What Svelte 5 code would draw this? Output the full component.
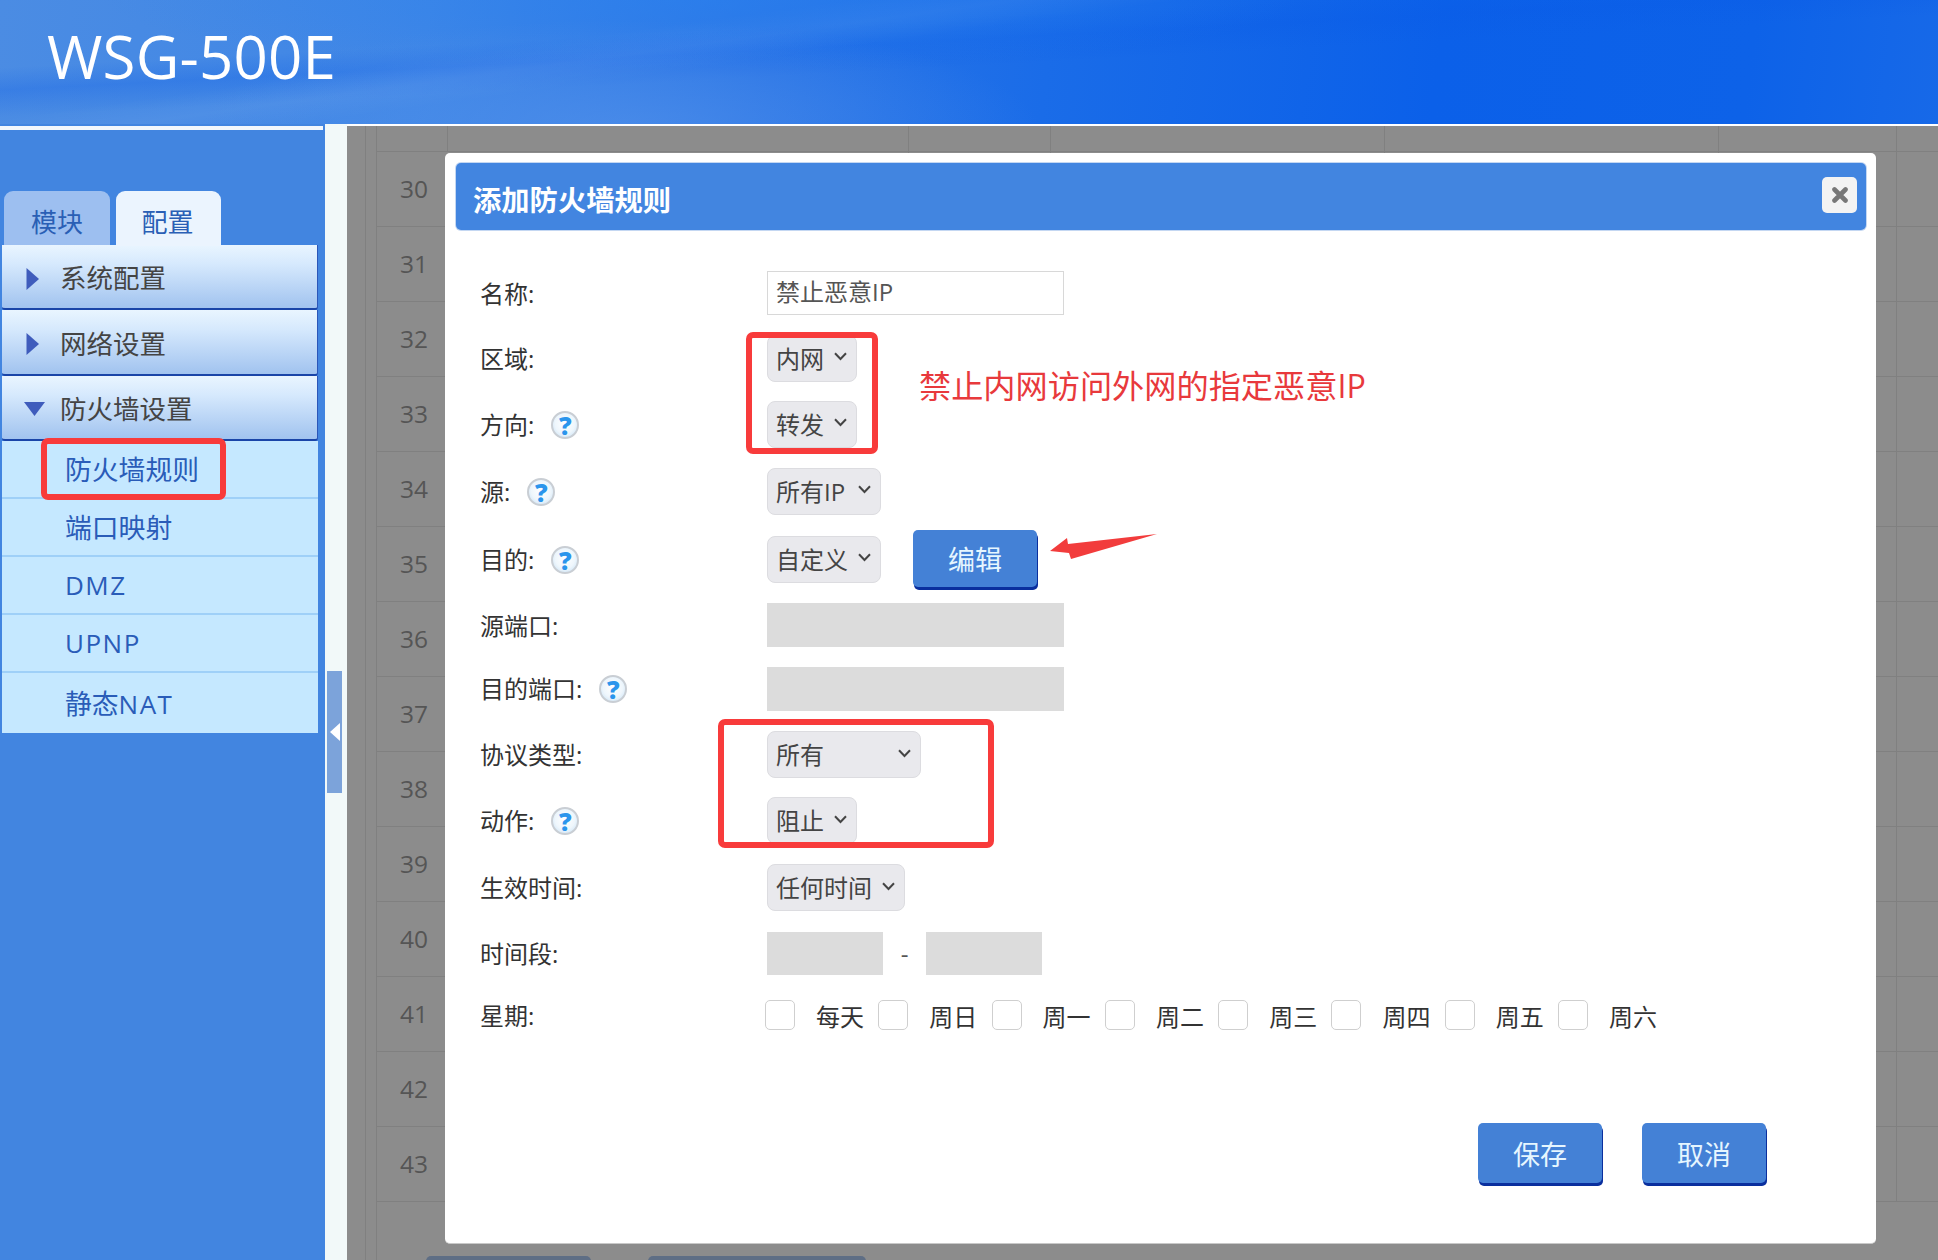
<script>
  const cols = [0, 1, 2, 3, 4, 5];
  const rowNums = Array.from({ length: 14 }, (_, i) => 30 + i);
  const menu = [
    { label: '系统配置', open: false },
    { label: '网络设置', open: false },
    { label: '防火墙设置', open: true }
  ];
  const subs = ['防火墙规则', '端口映射', 'DMZ', 'UPNP', '静态NAT'];
  const days = ['每天', '周日', '周一', '周二', '周三', '周四', '周五', '周六'];
  const parts = (s) => s.split(/([A-Za-z]+)/).filter(Boolean);
  const isLatin = (s) => /^[A-Za-z]+$/.test(s);
</script>

{#snippet help()}
  <span class="help" aria-hidden="true">?</span>
{/snippet}

{#snippet select(text, cls)}
  <div class="select {cls}">
    <span class="sel-text">{text}</span>
    <svg width="13" height="9" viewBox="0 0 13 9" aria-hidden="true"><polyline points="1,1.2 6.5,7 12,1.2" fill="none" stroke="#444" stroke-width="2" /></svg>
  </div>
{/snippet}

<div class="page">
  <header class="header">
    <div class="logo">WSG-500E</div>
  </header>
  <div class="main">
    <aside class="sidebar">
      <div class="whiteline"></div>
      <div class="tabs">
        <div class="tab off">模块</div>
        <div class="tab on">配置</div>
      </div>
      {#each menu as m}
        <div class="head">
          <svg class="arrow" width="21" height="24" viewBox="0 0 21 24" aria-hidden="true">
            {#if m.open}
              <path d="M0 5 H21 L10.5 19 Z" fill="#3f5cbc" />
            {:else}
              <path d="M2.5 1 L15 12 L2.5 23 Z" fill="#3f5cbc" />
            {/if}
          </svg>
          <span>{m.label}</span>
        </div>
      {/each}
      <div class="subs">
        {#each subs as s}
          <div class="sub">
            <span>{#each parts(s) as p}<span class:latin={isLatin(p)}>{p}</span>{/each}</span>
          </div>
        {/each}
      </div>
      <div class="mark side"></div>
    </aside>
    <div class="splitter">
      <div class="toggle">
        <svg width="10" height="18" viewBox="0 0 10 18" aria-hidden="true"><path d="M10 0 V18 L0 9 Z" fill="#fff" /></svg>
      </div>
    </div>
    <section class="content">
      <div class="table">
        <div class="row first">
          {#each cols as c}<div class="cell"></div>{/each}
        </div>
        {#each rowNums as n}
          <div class="row">
            <div class="cell num">{n}</div>
            {#each cols.slice(1) as c}<div class="cell"></div>{/each}
          </div>
        {/each}
      </div>
      <div class="bars">
        <div class="bar a"></div>
        <div class="bar b"></div>
      </div>

      <div class="modal">
        <div class="title">
          <span class="title-text">添加防火墙规则</span>
          <button class="close" aria-label="关闭">
            <svg width="16" height="16" viewBox="0 0 16 16" aria-hidden="true"><path d="M2.5 2.5 L13.5 13.5 M13.5 2.5 L2.5 13.5" stroke="#777" stroke-width="4.6" stroke-linecap="round" /></svg>
          </button>
        </div>
        <div class="form">
          <div class="lab">名称:</div>
          <div class="ctl"><div class="input text">禁止恶意IP</div></div>

          <div class="lab">区域:</div>
          <div class="ctl">{@render select('内网', 's90')}</div>

          <div class="lab">方向:{@render help()}</div>
          <div class="ctl">{@render select('转发', 's90')}</div>

          <div class="lab">源:{@render help()}</div>
          <div class="ctl">{@render select('所有IP', 's114')}</div>

          <div class="lab">目的:{@render help()}</div>
          <div class="ctl">
            {@render select('自定义', 's114')}
            <button class="btn edit">编辑</button>
          </div>

          <div class="lab">源端口:</div>
          <div class="ctl"><div class="input gray"></div></div>

          <div class="lab">目的端口:{@render help()}</div>
          <div class="ctl"><div class="input gray"></div></div>

          <div class="lab">协议类型:</div>
          <div class="ctl">{@render select('所有', 's154')}</div>

          <div class="lab">动作:{@render help()}</div>
          <div class="ctl">{@render select('阻止', 's90')}</div>

          <div class="lab">生效时间:</div>
          <div class="ctl">{@render select('任何时间', 's138')}</div>

          <div class="lab">时间段:</div>
          <div class="ctl time">
            <div class="input gray short"></div>
            <span class="dash">-</span>
            <div class="input gray short"></div>
          </div>

          <div class="lab">星期:</div>
          <div class="ctl week">
            {#each days as d}
              <div class="day"><span class="check"></span><span>{d}</span></div>
            {/each}
          </div>
        </div>
        <div class="footer">
          <button class="btn">保存</button>
          <button class="btn">取消</button>
        </div>

        <div class="mark box1"></div>
        <div class="mark box2"></div>
        <div class="note">禁止内网访问外网的指定恶意IP</div>
        <svg class="pointer" width="110" height="28" viewBox="0 0 110 28" aria-hidden="true">
          <path d="M0 17 L17 4 L18 10 L107 0 L21 25 L19 19 Z" fill="#f23c3c" />
        </svg>
      </div>
    </section>
  </div>
</div>

<style>
  :global(body) {
    margin: 0;
    overflow: hidden;
  }
  .page {
    width: 1938px;
    height: 1260px;
    display: flex;
    flex-direction: column;
    overflow: hidden;
    font-family: "Open Sans", "Noto Sans CJK SC", sans-serif;
    color: #333;
    font-size: 24px;
  }
  .header {
    height: 124px;
    flex: none;
    box-sizing: border-box;
    padding-left: 47px;
    background:
      radial-gradient(ellipse 420px 110px at 620px 130px, rgba(90,150,235,0.55), rgba(90,150,235,0)),
      radial-gradient(ellipse 600px 70px at 700px 0px, rgba(40,130,240,0.5), rgba(40,130,240,0)),
      linear-gradient(172deg, rgba(255,255,255,0) 30%, rgba(255,255,255,0.05) 36%, rgba(255,255,255,0) 42%),
      linear-gradient(177deg, rgba(10,90,230,0) 30%, rgba(10,90,230,0.28) 40%, rgba(10,90,230,0) 52%),
      linear-gradient(97deg, #4b8ce3 0%, #3f86e6 22%, #2a75e6 40%, #1a6ce8 54%, #0b60e9 74%, #0d62e8 90%, #1769e8 100%);
  }
  .logo {
    color: #fff;
    font-size: 60px;
    font-weight: 400;
    line-height: 112px;
    letter-spacing: 0.2px;
  }
  .main {
    flex: 1;
    display: flex;
    min-height: 0;
  }
  .sidebar {
    width: 325px;
    flex: none;
    position: relative;
    background: #4285e0;
  }
  .whiteline {
    height: 4px;
    width: 323px;
    margin-top: 2px;
    background: #f2f7fc;
  }
  .tabs {
    display: flex;
    gap: 6px;
    margin: 61px 0 0 4px;
    height: 54px;
  }
  .tab {
    width: 106px;
    box-sizing: border-box;
    padding-top: 8px;
    border-radius: 9px 9px 0 0;
    text-align: center;
    font-size: 26px;
    color: #2a5fb5;
    line-height: 46px;
  }
  .tab.off {
    background: #9dbff0;
  }
  .tab.on {
    background: #ebf4fe;
    width: 105px;
    height: 55px;
    padding-right: 2px;
  }
  .head {
    width: 316px;
    margin-left: 2px;
    height: 65.3px;
    box-sizing: border-box;
    display: flex;
    align-items: center;
    gap: 15px;
    padding: 4px 0 0 22px;
    font-size: 26.5px;
    color: #444;
    background: linear-gradient(180deg, #e9f5ff 0%, #d6e9fd 30%, #a1c3ef 100%);
    border-right: 1px solid #2b56b8;
    border-bottom: 2px solid #1a45a8;
    border-radius: 0 0 3px 3px;
  }
  .head span {
    line-height: 1;
  }
  .subs {
    width: 316px;
    margin-left: 2px;
    background: #c5e8ff;
  }
  .sub {
    height: 58px;
    box-sizing: border-box;
    padding-left: 63px;
    display: flex;
    align-items: center;
    font-size: 26.8px;
    color: #2a5cb8;
    border-bottom: 2px solid #9fd0f8;
  }
  .sub:last-child {
    border-bottom: 0;
    height: 60px;
  }
  .latin {
    font-size: 26px;
    letter-spacing: 1.5px;
  }
  .mark {
    position: absolute;
    box-sizing: border-box;
    border: 6px solid #f83b3b;
    border-radius: 7px;
  }
  .side {
    left: 41px;
    top: 314px;
    width: 185px;
    height: 62px;
  }
  .splitter {
    width: 22px;
    flex: none;
    background: #f2f9f9;
    position: relative;
  }
  .toggle {
    position: absolute;
    left: 2px;
    top: 547px;
    width: 15px;
    height: 122px;
    background: #7ca3da;
    display: flex;
    align-items: center;
    justify-content: center;
  }
  .content {
    flex: 1;
    position: relative;
    min-width: 0;
    box-sizing: border-box;
    border-top: 2px solid #fff;
    padding-left: 29px;
    background-color: #8c8c8c;
    background-image:
      linear-gradient(#808080, #808080),
      linear-gradient(#808080, #808080);
    background-size: 1px 100%, 1px 100%;
    background-position: 18px 0, 29px 0;
    background-repeat: no-repeat;
  }
  .table {
    display: flex;
    flex-direction: column;
  }
  .row {
    display: grid;
    grid-template-columns: 72px 461px 142px 334px 334px 178px;
    height: 75px;
    box-sizing: border-box;
    border-bottom: 1px solid #808080;
  }
  .row.first {
    height: 26px;
  }
  .cell {
    border-right: 1px solid #808080;
  }
  .num {
    font-size: 24.5px;
    color: #555;
    display: flex;
    align-items: center;
    justify-content: flex-start;
    padding: 0 0 2px 24px;
    border-right: 0;
  }
  .bars {
    display: flex;
    gap: 57px;
    margin: 54px 0 0 50px;
  }
  .bar {
    height: 12px;
    border-radius: 5px 5px 0 0;
    background: #5e6e85;
  }
  .bar.a { width: 165px; }
  .bar.b { width: 218px; }
  .modal {
    position: absolute;
    left: 98px;
    top: 27px;
    width: 1431px;
    height: 1091px;
    box-sizing: border-box;
    background: #fff;
    border-radius: 5px;
    padding: 10px 10px 0 11px;
    border-bottom: 1px solid #c8c8c8;
  }
  .title {
    height: 67px;
    background: #4285e0;
    border-radius: 5px;
    display: flex;
    align-items: center;
    justify-content: space-between;
    padding-left: 17px;
    box-sizing: border-box;
    color: #fff;
    font-size: 28.3px;
    font-weight: 700;
    box-shadow: 0 0 0 1px #c4d7f2;
  }
  .title-text {
    padding-top: 3px;
  }
  .close {
    width: 35px;
    height: 36px;
    margin: -3px 9px 0 0;
    padding: 0;
    border: 0;
    border-radius: 5px;
    background: #f3f3f3;
    display: flex;
    align-items: center;
    justify-content: center;
  }
  .form {
    display: grid;
    grid-template-columns: 287px 1fr;
    grid-template-rows: 60px 70px 62px 72px 64px 68px 59px 73px 59px 75px 57px 66px;
    margin: 33px 0 0 24px;
  }
  .lab {
    display: flex;
    align-items: center;
    gap: 17px;
    color: #333;
    white-space: nowrap;
    padding-bottom: 2px;
  }
  .ctl {
    display: flex;
    align-items: center;
  }
  .select {
    height: 47px;
    box-sizing: border-box;
    border: 1px solid #dcdce0;
    border-radius: 8px;
    background: #e9e9ed;
    display: flex;
    align-items: center;
    justify-content: space-between;
    padding: 0 9px 0 8px;
    color: #444;
  }
  .sel-text {
    padding-bottom: 2px;
  }
  .select svg {
    margin-top: -3px;
    flex: none;
  }
  .s90 { width: 90px; }
  .s114 { width: 114px; }
  .s138 { width: 138px; }
  .s154 { width: 154px; }
  .input {
    width: 297px;
    height: 44px;
    box-sizing: border-box;
  }
  .input.text {
    border: 1px solid #d8d8d8;
    color: #555;
    line-height: 40px;
    padding-left: 8px;
  }
  .input.gray {
    background: #dcdcdc;
  }
  .input.short {
    width: 116px;
    height: 43px;
  }
  .dash {
    width: 43px;
    text-align: center;
    color: #555;
  }
  .btn {
    width: 124px;
    height: 60px;
    padding: 0;
    border: 0;
    border-radius: 5px;
    background: #4481d6;
    color: #e6f6ff;
    font: inherit;
    font-size: 27px;
    box-shadow: 1px 3px 0 #0a2f9e;
  }
  .btn.edit {
    height: 57px;
    margin: -2px 0 0 32px;
  }
  .week {
    margin-left: -2px;
  }
  .day {
    width: 113.3px;
    flex: none;
    display: flex;
    align-items: center;
    gap: 21px;
  }
  .check {
    width: 30px;
    height: 30px;
    box-sizing: border-box;
    border: 1px solid #cfcfcf;
    border-radius: 5px;
    background: #fff;
  }
  .footer {
    display: flex;
    justify-content: flex-end;
    gap: 40px;
    margin: 75px 100px 0 0;
  }
  .box1 {
    left: 301px;
    top: 179px;
    width: 132px;
    height: 122px;
  }
  .box2 {
    left: 273px;
    top: 566px;
    width: 276px;
    height: 129px;
  }
  .note {
    position: absolute;
    left: 474px;
    top: 212px;
    font-size: 32.2px;
    line-height: 42px;
    color: #e8393c;
    white-space: nowrap;
  }
  .pointer {
    position: absolute;
    left: 605px;
    top: 381px;
  }
  .help {
    flex: none;
    width: 28px;
    height: 28px;
    margin-top: 3px;
    box-sizing: border-box;
    border-radius: 50%;
    border: 2px solid #c9ced4;
    background: radial-gradient(circle at 50% 45%, #ffffff 0%, #eef6fc 55%, #bfdcf3 100%);
    color: #2b95ec;
    font-size: 25px;
    font-weight: 800;
    line-height: 24px;
    text-align: center;
  }
</style>
